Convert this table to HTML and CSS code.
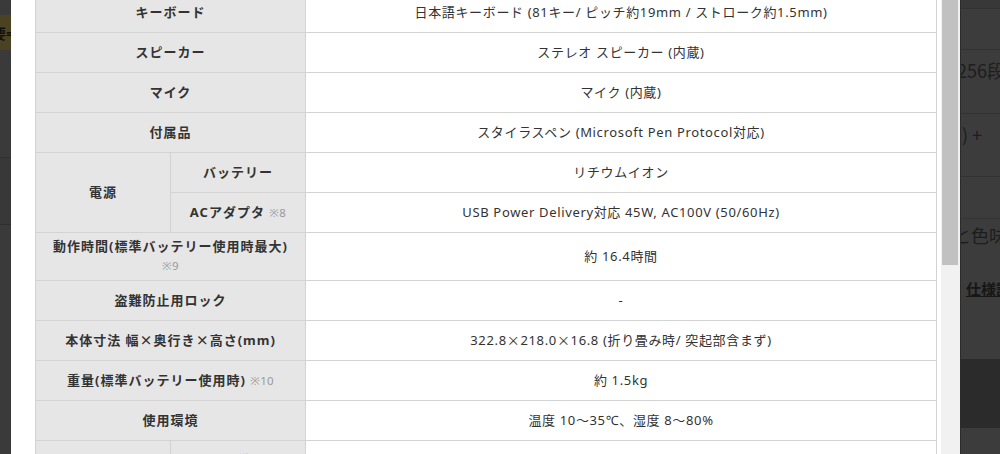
FILE: index.html
```html
<!DOCTYPE html>
<html lang="ja">
<head>
<meta charset="utf-8">
<title>仕様</title>
<link rel="stylesheet" href="styles.css">
</head>
<body>
<div class="page">
  <div class="bg-left">
    <div class="bl-top"></div>
    <div class="bl-badge"><span>要=</span></div>
    <div class="bl-row bl-row1"></div>
    <div class="bl-row bl-row2"></div>
    <div class="bl-rest"></div>
  </div>
  <div class="modal">
    <div class="modal-body">
      <table class="spec">
        <colgroup><col class="c1"><col class="c2"><col class="c3"></colgroup>
        <tbody>
          <tr><th colspan="2">キーボード</th><td>日本語キーボード (81キー/ ピッチ約19mm / ストローク約1.5mm)</td></tr>
          <tr><th colspan="2">スピーカー</th><td>ステレオ スピーカー (内蔵)</td></tr>
          <tr><th colspan="2">マイク</th><td>マイク (内蔵)</td></tr>
          <tr><th colspan="2">付属品</th><td>スタイラスペン (Microsoft Pen Protocol対応)</td></tr>
          <tr><th rowspan="2">電源</th><th>バッテリー</th><td>リチウムイオン</td></tr>
          <tr><th>ACアダプタ <span class="note">※8</span></th><td>USB Power Delivery対応 45W, AC100V (50/60Hz)</td></tr>
          <tr><th colspan="2">動作時間(標準バッテリー使用時最大)<br><span class="note">※9</span></th><td>約 16.4時間</td></tr>
          <tr><th colspan="2">盗難防止用ロック</th><td>-</td></tr>
          <tr><th colspan="2">本体寸法 幅<span class="x">×</span>奥行き<span class="x">×</span>高さ(mm)</th><td>322.8<span class="x">×</span>218.0<span class="x">×</span>16.8 (折り畳み時/ 突起部含まず)</td></tr>
          <tr><th colspan="2">重量(標準バッテリー使用時) <span class="note">※10</span></th><td>約 1.5kg</td></tr>
          <tr><th colspan="2">使用環境</th><td>温度 10～35℃、湿度 8～80%</td></tr>
          <tr><th rowspan="2">消費電力</th><th>標準</th><td>約 4W (スリープ時 最大約1W)</td></tr>
          <tr><th>最大</th><td>約 45W</td></tr>
        </tbody>
      </table>
    </div>
    <div class="scrollbar"><div class="thumb"></div></div>
  </div>
  <div class="bg-right">
    <div class="br-row br-a"></div>
    <div class="br-row br-b"></div>
    <div class="br-row br-c"><span class="br-text t1">256段</span></div>
    <div class="br-row br-d"><span class="br-text t2">n) +</span></div>
    <div class="br-row br-e"></div>
    <div class="br-block">
      <span class="br-text t3">と色味</span>
      <span class="br-link">仕様詳</span>
    </div>
    <div class="br-dark"></div>
    <div class="br-last"></div>
  </div>
</div>
</body>
</html>
```
FILE: styles.css
```css
html, body {
  margin: 0;
  padding: 0;
  background: #3b3b3b;
}
.page {
  display: flex;
  width: 1000px;
  height: 454px;
  overflow: hidden;
  font-family: "Noto Sans", "Noto Sans CJK JP", sans-serif;
}
/* dimmed page behind the modal, left side */
.bg-left {
  width: 11px;
  flex: none;
  display: flex;
  flex-direction: column;
  overflow: hidden;
  background: #3a3a3a;
}
.bl-top { height: 15px; }
.bl-badge {
  height: 35px;
  background: #4a4221;
  display: flex;
  align-items: center;
  justify-content: flex-end;
  overflow: hidden;
}
.bl-badge span {
  font-size: 14px;
  font-weight: 700;
  color: #111;
  white-space: nowrap;
  margin-right: -3px;
}
.bl-row { border-bottom: 1px solid #2e2e2e; }
.bl-row1 { height: 107px; }
.bl-row2 { height: 66px; background: #383838; }
.bl-rest { flex: 1; }

/* modal */
.modal {
  width: 949px;
  flex: none;
  display: flex;
  background: #fff;
}
.modal-body {
  flex: 1;
  padding: 0 5px 0 24px;
  overflow: hidden;
}
.scrollbar {
  width: 19px;
  flex: none;
  background: #f1f1f1;
}
.thumb {
  width: 16px;
  height: 265px;
  margin-left: 1px;
  background: #c1c1c1;
}

.spec {
  width: 901px;
  margin-top: -8px;
  border-collapse: collapse;
  table-layout: fixed;
  font-size: 13px;
  color: #333;
}
.spec .c1 { width: 135px; }
.spec .c2 { width: 135px; }
.spec .c3 { width: 631px; }
.spec tr { height: 40px; }
.spec th, .spec td {
  border: 1px solid #d3d3d3;
  padding: 4px 6px 5px;
  line-height: 19px;
  text-align: center;
  vertical-align: middle;
}
.spec th {
  background: #e6e6e6;
  font-weight: 700;
  letter-spacing: 1px;
}
.spec td {
  background: #fff;
  font-weight: 400;
  letter-spacing: 0.65px;
}
.x {
  font-family: "Noto Sans CJK JP", sans-serif;
}
.note {
  font-size: 11.5px;
  font-weight: 400;
  color: #9a9a9a;
  letter-spacing: 0.3px;
}

/* dimmed page behind the modal, right side */
.bg-right {
  flex: 1;
  display: flex;
  flex-direction: column;
  background: #3c3c3c;
  border-left: 1px solid #2c2c2c;
  overflow: hidden;
}
.br-row { border-bottom: 1px solid #333; }
.br-a { height: 8px; background: #383838; }
.br-b { height: 40px; }
.br-c { height: 63px; }
.br-d { height: 62px; }
.br-e { height: 41px; }
.br-block {
  height: 140px;
  display: flex;
  flex-direction: column;
}
.br-text {
  display: block;
  white-space: nowrap;
  font-family: "Noto Sans CJK JP", sans-serif;
  font-size: 18px;
  line-height: 24px;
  color: #1d1d1d;
}
.t1 { margin: 8px 0 0 -4px; }
.t2 { margin: 8px 0 0 -10px; }
.t3 { margin: 4px 0 0 -8px; }
.br-link {
  display: block;
  white-space: nowrap;
  margin: 32px 0 0 5px;
  font-family: "Noto Sans CJK JP", sans-serif;
  font-size: 15px;
  font-weight: 700;
  line-height: 20px;
  color: #161616;
  text-decoration: underline;
}
.br-dark { height: 69px; background: #2b2b2b; }
.br-last { flex: 1; background: #3c3c3c; }
```
